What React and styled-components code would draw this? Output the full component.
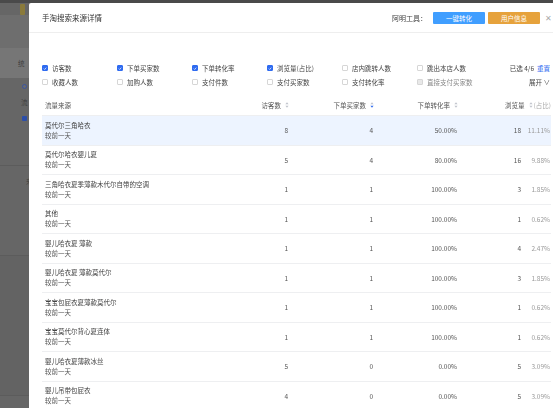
import styled, { createGlobalStyle, css } from "styled-components"

const GlobalStyle = createGlobalStyle`
  html, body {
    margin: 0;
    padding: 0;
    width: 553px;
    height: 408px;
    overflow: hidden;
    background: #666;
    font-family: "Noto Sans CJK SC", "Noto Sans", sans-serif;
    -webkit-font-smoothing: antialiased;
  }
`

// tiny text picks up colour fringes otherwise
const flatText = css`
  filter: grayscale(1);
`

const filters = [
  { label: "访客数", checked: true },
  { label: "下单买家数", checked: true },
  { label: "下单转化率", checked: true },
  { label: "浏览量(占比)", checked: true },
  { label: "店内跳转人数" },
  { label: "跳出本店人数" },
  { label: "收藏人数" },
  { label: "加购人数" },
  { label: "支付件数" },
  { label: "支付买家数" },
  { label: "支付转化率" },
  { label: "直接支付买家数", disabled: true },
]

const rows = [
  ["莫代尔三角哈衣", 8, 4, "50.00%", 18, "11.11%"],
  ["莫代尔哈衣婴儿夏", 5, 4, "80.00%", 16, "9.88%"],
  ["三角哈衣夏季薄款木代尔自带的空调", 1, 1, "100.00%", 3, "1.85%"],
  ["其他", 1, 1, "100.00%", 1, "0.62%"],
  ["婴儿哈衣夏 薄款", 1, 1, "100.00%", 4, "2.47%"],
  ["婴儿哈衣夏 薄款莫代尔", 1, 1, "100.00%", 3, "1.85%"],
  ["宝宝包屁衣夏薄款莫代尔", 1, 1, "100.00%", 1, "0.62%"],
  ["宝宝莫代尔背心夏连体", 1, 1, "100.00%", 1, "0.62%"],
  ["婴儿哈衣夏薄款冰丝", 5, 0, "0.00%", 5, "3.09%"],
  ["婴儿吊带包屁衣", 4, 0, "0.00%", 5, "3.09%"],
]

const Page = styled.div`
  width: 553px;
  height: 408px;
  display: flex;
  flex-direction: column;
  border-top: 3px solid #4a4a4a;
  box-sizing: border-box;
`

const BackStrip = styled.div`
  width: 29px;
  height: ${(p) => p.h}px;
  background: ${(p) => p.bg || "transparent"};
  display: flex;
  align-items: center;
  padding-left: ${(p) => p.pl || 20}px;
  box-sizing: border-box;
  border-bottom: ${(p) => (p.line ? "1px solid #5c5c5c" : "none")};
`

const BackDot = styled.span`
  width: 5px;
  height: ${(p) => p.h || 5}px;
  border-radius: ${(p) => (p.round ? "50%" : "1px")};
  background: ${(p) => p.bg};
  border: ${(p) => (p.round ? "1px solid #3b55a0" : "none")};
  box-sizing: border-box;
`

const BackText = styled.span`
  font-size: 6.5px;
  color: #3e3e3e;
`

const Modal = styled.div`
  position: absolute;
  left: 29px;
  top: 3px;
  width: 535px;
  height: 420px;
  background: #fff;
  border-radius: 2px;
  display: flex;
  flex-direction: column;
`

const Header = styled.div`
  height: 29px;
  flex-shrink: 0;
  display: flex;
  align-items: center;
  padding: 0 12px 0 13px;
  border-bottom: 1px solid #eee;
`

const Title = styled.div`
  ${flatText}
  flex: 1;
  font-size: 7.5px;
  color: #333;
`

const ToolLabel = styled.span`
  ${flatText}
  font-size: 7px;
  color: #444;
  margin-right: 3px;
`

const ActionButton = styled.div`
  width: 52px;
  height: 12px;
  background: ${(p) => p.bg};
  color: #fff;
  font-size: 6.5px;
  display: flex;
  align-items: center;
  justify-content: center;
  border-radius: 1px;
  margin-left: 3px;
`

const Close = styled.span`
  font-size: 8px;
  color: #aaa;
  margin-left: 5px;
  line-height: 1;
`

const Body = styled.div`
  padding: 0 13px;
  display: flex;
  flex-direction: column;
`

const FilterArea = styled.div`
  display: flex;
  padding: 28px 0 6px;
`

const FilterGrid = styled.div`
  flex: 1;
  display: grid;
  grid-template-columns: repeat(6, 75px);
  grid-auto-rows: 14px;
`

const FilterItem = styled.div`
  display: flex;
  align-items: center;
  gap: 4px;
  font-size: 6.5px;
  color: ${(p) => (p.disabled ? "#888" : "#444")};
`

const Label = styled.span`
  ${flatText}
`

const Box = styled.span`
  width: 6px;
  height: 6px;
  box-sizing: border-box;
  border-radius: 1px;
  border: 1px solid ${(p) => (p.checked ? "#2f6bf0" : "#d6d6d6")};
  background: ${(p) => (p.checked ? "#2f6bf0" : p.disabled ? "#e8e8e8" : "#fff")};
  display: flex;
  align-items: center;
  justify-content: center;
`

const FilterSide = styled.div`
  display: grid;
  grid-auto-rows: 14px;
  justify-items: end;
  align-items: center;
  font-size: 6.5px;
  color: #444;
  padding-right: 1px;
`

const Link = styled.span`
  color: #2f6bf0;
  margin-left: 3px;
`

const Row = styled.div`
  display: grid;
  grid-template-columns: 1fr 60px 85px 84px 93px;
  align-items: center;
  height: ${(p) => p.h}px;
  border-bottom: 1px solid #eeeff1;
  background: ${(p) => (p.active ? "#edf4ff" : "#fff")};
  box-sizing: border-box;
`

const HeadCell = styled.div`
  font-size: 6.5px;
  color: #555;
  display: flex;
  align-items: center;
  justify-content: ${(p) => (p.left ? "flex-start" : "flex-end")};
  padding-left: ${(p) => (p.left ? 3 : 0)}px;
  gap: 4px;
`

const Hint = styled.span`
  ${flatText}
  color: #aaa;
  margin-left: -3px;
`

const NameCell = styled.div`
  ${flatText}
  padding-left: 3px;
  display: flex;
  flex-direction: column;
  gap: 1px;
  font-size: 6.5px;
  line-height: 9px;
  color: #444;
`

const Sub = styled.span`
  color: #555;
`

const Num = styled.div`
  ${flatText}
  font-size: 6.5px;
  color: #555;
  text-align: right;
  padding-right: ${(p) => p.pr || 0}px;
`

const ViewCell = styled.div`
  ${flatText}
  display: flex;
  justify-content: flex-end;
  font-size: 6.5px;
  color: #555;
`

const Pct = styled.span`
  width: 29px;
  text-align: right;
  color: #9a9a9a;
  padding-right: 1px;
`

const Sort = ({ active }) => (
  <svg width="4" height="6" viewBox="0 0 4 6">
    <path d="M2 0.3 L3.6 2.3 H0.4 Z" fill="#c0c4cc" />
    <path d="M2 5.7 L3.6 3.7 H0.4 Z" fill={active ? "#2f6bf0" : "#c0c4cc"} />
  </svg>
)

const Check = () => (
  <svg width="5" height="5" viewBox="0 0 10 10">
    <path d="M2 5.2 L4.2 7.4 L8.2 2.8" stroke="#fff" strokeWidth="1.8" fill="none" />
  </svg>
)

export default function App() {
  return (
    <>
      <GlobalStyle />
      <Page>
        <BackStrip h={12} pl={20}>
          <BackDot bg="#8a7a3a" h={11} />
        </BackStrip>
        <BackStrip h={33} bg="#6e6e6e" />
        <BackStrip h={30} bg="#767676" pl={18}>
          <BackText>统</BackText>
        </BackStrip>
        <BackStrip h={16} pl={22}>
          <BackDot round bg="#6b6b6b" />
        </BackStrip>
        <BackStrip h={16} pl={21}>
          <BackText>流</BackText>
        </BackStrip>
        <BackStrip h={16} pl={22}>
          <BackDot bg="#2c4ea8" />
        </BackStrip>
        <BackStrip h={40} line />
        <BackStrip h={30} pl={26}>
          <BackText>来</BackText>
        </BackStrip>
        <BackStrip h={60} line />
        <BackStrip h={140} bg="#636363" line />
      </Page>
      <Modal>
        <Header>
          <Title>手淘搜索来源详情</Title>
          <ToolLabel>阿明工具：</ToolLabel>
          <ActionButton bg="#409eff">一键转化</ActionButton>
          <ActionButton bg="#e6a23c">用户信息</ActionButton>
          <Close>✕</Close>
        </Header>
        <Body>
          <FilterArea>
            <FilterGrid>
              {filters.map((f) => (
                <FilterItem key={f.label} disabled={f.disabled}>
                  <Box checked={f.checked} disabled={f.disabled}>
                    {f.checked && <Check />}
                  </Box>
                  <Label>{f.label}</Label>
                </FilterItem>
              ))}
            </FilterGrid>
            <FilterSide>
              <div>
                <Label>已选 4/6</Label>
                <Link>重置</Link>
              </div>
              <Label>展开 ∨</Label>
            </FilterSide>
          </FilterArea>
          <Row h={21}>
            <HeadCell left>
              <Label>流量来源</Label>
            </HeadCell>
            <HeadCell>
              <Label>访客数</Label> <Sort />
            </HeadCell>
            <HeadCell>
              <Label>下单买家数</Label> <Sort active />
            </HeadCell>
            <HeadCell>
              <Label>下单转化率</Label> <Sort />
            </HeadCell>
            <HeadCell>
              <Label>浏览量</Label> <Sort />
              <Hint>(占比)</Hint>
            </HeadCell>
          </Row>
          {rows.map((r, i) => (
            <Row key={r[0]} h={29.5} active={i === 0}>
              <NameCell>
                <span>{r[0]}</span>
                <Sub>较前一天</Sub>
              </NameCell>
              <Num pr={1}>{r[1]}</Num>
              <Num pr={1}>{r[2]}</Num>
              <Num pr={1}>{r[3]}</Num>
              <ViewCell>
                {r[4]}
                <Pct>{r[5]}</Pct>
              </ViewCell>
            </Row>
          ))}
        </Body>
      </Modal>
    </>
  )
}
